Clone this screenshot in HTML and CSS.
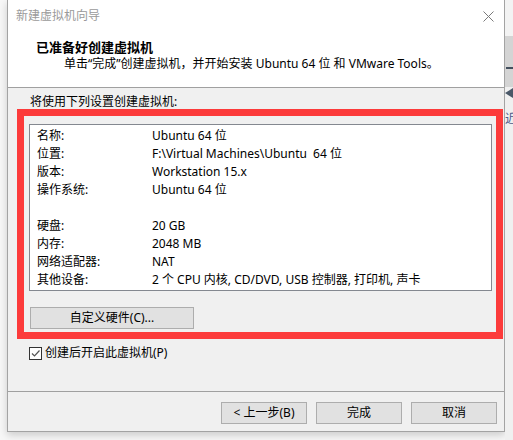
FILE: index.html
```html
<!DOCTYPE html>
<html lang="zh-CN">
<head>
  <meta charset="UTF-8" />
  <title>新建虚拟机向导</title>
  <link rel="stylesheet" href="styles.css">
</head>
<body>

  <div class="window">
    <div class="titlebar">
      <span class="title">新建虚拟机向导</span>
      <span class="close">
        <svg width="11" height="11" viewBox="0 0 11 11"><path d="M0.5 0.5 L10.5 10.5 M10.5 0.5 L0.5 10.5" stroke="#7a7a7a" stroke-width="1" fill="none"/></svg>
      </span>
    </div>

    <div class="header">
      <div class="head-title">已准备好创建虚拟机</div>
      <div class="head-sub">单击“完成”创建虚拟机，并开始安装 Ubuntu 64 位 和 VMware Tools。</div>
    </div>

    <div class="content">
      <div class="intro">将使用下列设置创建虚拟机:</div>

      <div class="highlight">
        <div class="summary">
          <div class="row"><span class="key">名称:</span><span>Ubuntu 64 位</span></div>
          <div class="row"><span class="key">位置:</span><span>F:\Virtual Machines\Ubuntu&nbsp; 64 位</span></div>
          <div class="row"><span class="key">版本:</span><span>Workstation 15.x</span></div>
          <div class="row"><span class="key">操作系统:</span><span>Ubuntu 64 位</span></div>
          <div class="row"></div>
          <div class="row"><span class="key">硬盘:</span><span>20 GB</span></div>
          <div class="row"><span class="key">内存:</span><span>2048 MB</span></div>
          <div class="row"><span class="key">网络适配器:</span><span>NAT</span></div>
          <div class="row"><span class="key">其他设备:</span><span>2 个 CPU 内核, CD/DVD, USB 控制器, 打印机, 声卡</span></div>
        </div>
        <button class="btn hw-btn">自定义硬件(C)...</button>
      </div>

      <label class="check">
        <span class="box">
          <svg width="11" height="11" viewBox="0 0 11 11"><path d="M2 5.5 L4.5 8 L9.5 2.5" stroke="#555" stroke-width="1.2" fill="none"/></svg>
        </span>
        创建后开启此虚拟机(P)
      </label>
    </div>

    <div class="footer">
      <button class="btn">&lt; 上一步(B)</button>
      <button class="btn">完成</button>
      <button class="btn">取消</button>
    </div>
  </div>

  <div class="behind">
    <div class="b1"></div>
    <div class="b2"><span class="b-dash"></span></div>
    <div class="b3"><span class="b-icon"></span></div>
    <div class="b4">近</div>
    <div class="b5"></div>
  </div>

</body>
</html>
```

FILE: styles.css
```css
body {
  margin: 0;
  padding: 0;
  width: 513px;
  height: 440px;
  overflow: hidden;
  display: flex;
  background: #f7f7f7;
  font-family: 'Noto Sans', 'Noto Sans CJK SC', sans-serif;
  font-size: 12px;
  color: #000;
}

.window {
  margin-left: 7px;
  width: 496px;
  height: 431px;
  border: 1px solid #a3a3a3;
  border-top: none;
  background: #f0f0f0;
  box-shadow: 0 3px 8px rgba(0,0,0,0.18);
  display: flex;
  flex-direction: column;
}

.titlebar {
  height: 30px;
  flex-shrink: 0;
  background: #fff;
  display: flex;
  align-items: center;
  justify-content: space-between;
  padding: 0 10px 0 8px;
}

.title {
  color: #9a9a9a;
  font-size: 12px;
}

.close {
  display: flex;
  margin-top: 2px;
}

.header {
  height: 58px;
  flex-shrink: 0;
  background: #fff;
  border-bottom: 1px solid #a0a0a0;
  box-sizing: border-box;
}

.head-title {
  font-weight: bold;
  font-size: 13px;
  padding-left: 28px;
  margin-top: 8px;
  line-height: 18px;
}

.head-sub {
  padding-left: 56px;
  line-height: 16px;
}

.content {
  flex: 1;
  padding: 7px 0 0 9px;
  border-bottom: 1px solid #a0a0a0;
}

.intro {
  padding-left: 13px;
  line-height: 14px;
}

.highlight {
  width: 463px;
  border: 7px solid #fc3b3b;
  padding: 8px 4px 3px 5px;
}

.summary {
  background: #fff;
  border: 1px solid #848890;
  height: 167px;
  padding: 2px 0 0 7px;
  box-sizing: border-box;
}

.row {
  height: 18px;
  line-height: 18px;
  display: flex;
  white-space: nowrap;
}

.key {
  width: 115px;
}

.btn {
  font-family: 'Noto Sans', 'Noto Sans CJK SC', sans-serif;
  font-size: 12px;
  color: #000;
  background: #e1e1e1;
  border: 1px solid #adadad;
  width: 86px;
  height: 22px;
  padding: 0;
  line-height: 18px;
}

.hw-btn {
  margin-top: 16px;
  margin-left: 1px;
  width: 164px;
  display: block;
}

.check {
  display: flex;
  align-items: center;
  gap: 3px;
  margin-top: 6px;
  margin-left: 12px;
  line-height: 16px;
}

.box {
  width: 11px;
  height: 11px;
  border: 1px solid #333;
  background: #fff;
  display: flex;
}

.footer {
  height: 39px;
  flex-shrink: 0;
  display: flex;
  justify-content: flex-end;
  align-items: flex-start;
  gap: 9px;
  padding: 10px 7px 0 0;
  box-sizing: border-box;
}

.behind {
  width: 8px;
  display: flex;
  flex-direction: column;
}

.b1 { height: 36px; background: #f3f3f3; }
.b2 { height: 51px; background: #d4d4d4; position: relative; }
.b-dash {
  position: absolute;
  left: 1px;
  top: 31px;
  width: 7px;
  height: 2px;
  background: #44505e;
}
.b3 { height: 21px; background: #f0f0f0; position: relative; }
.b-icon {
  position: absolute;
  left: 0;
  top: 1px;
  width: 8px;
  height: 10px;
  background: #4a5868;
  clip-path: polygon(0 50%, 100% 0, 100% 100%);
}
.b4 {
  height: 22px;
  background: #f0f0f0;
  font-size: 12px;
  color: #4e5a8a;
  overflow: hidden;
  line-height: 22px;
}
.b5 { flex: 1; background: #f0f0f0; }
```
